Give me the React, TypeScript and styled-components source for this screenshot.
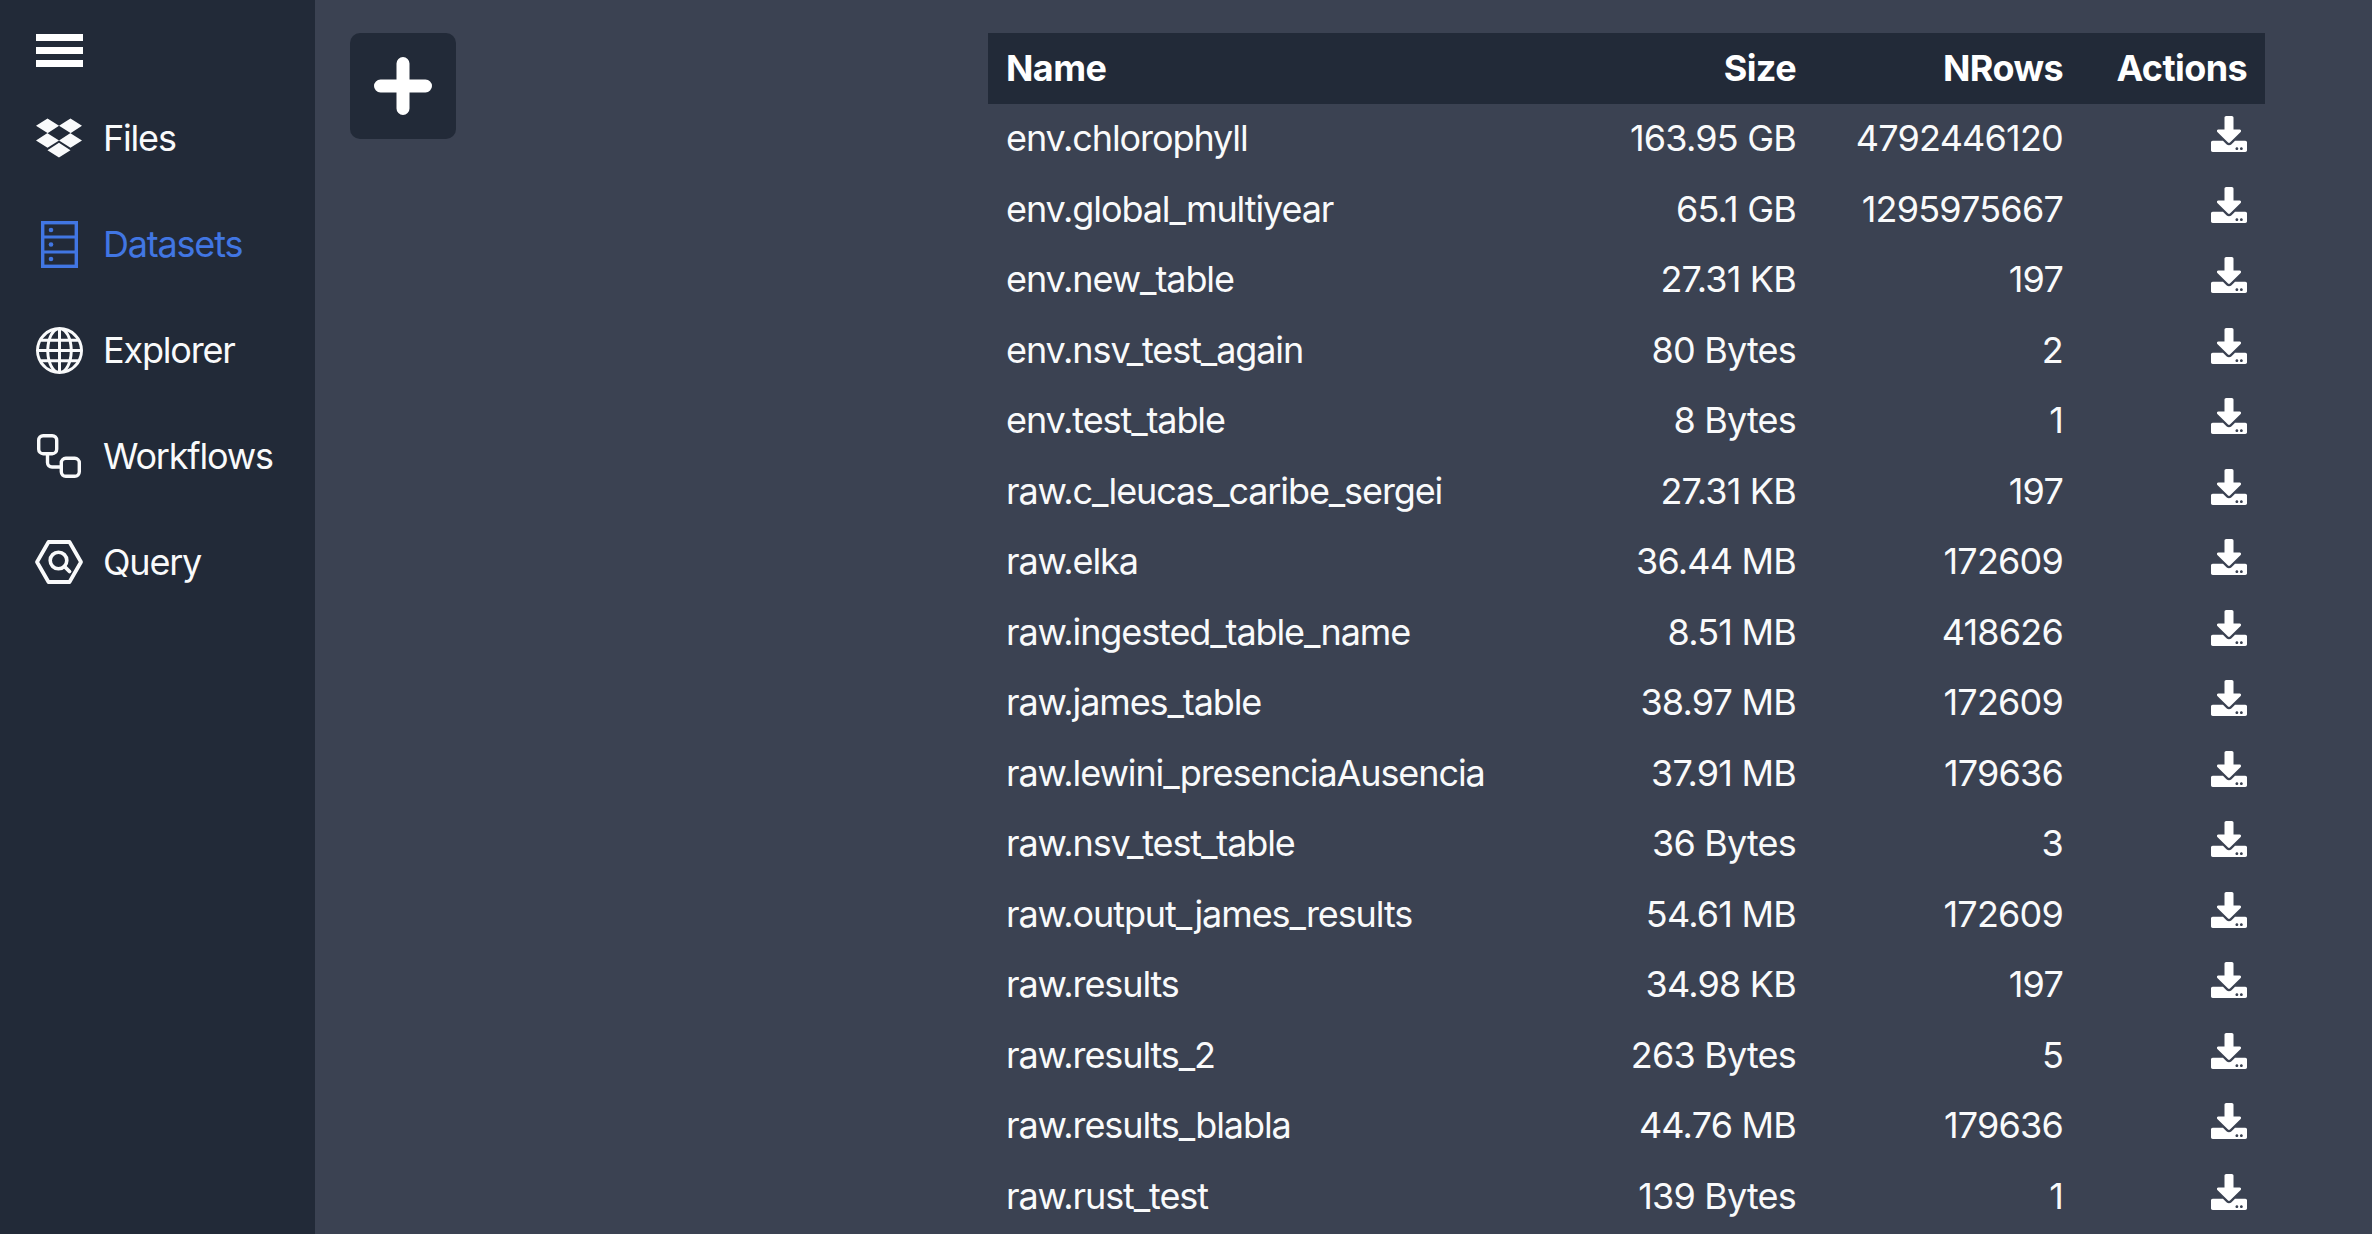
import React from "react";
import styled, { createGlobalStyle } from "styled-components";
import { FaDropbox, FaDownload } from "react-icons/fa";
import { BsGlobe } from "react-icons/bs";

const GlobalStyle = createGlobalStyle`
  html, body {
    margin: 0;
    padding: 0;
    height: 100%;
    overflow: hidden;
    background: #3b4252;
  }
  body {
    font-family: Inter, "Liberation Sans", sans-serif;
    color: #f9fafb;
  }
`;

const rows = [
  ["env.chlorophyll", "163.95 GB", "4792446120"],
  ["env.global_multiyear", "65.1 GB", "1295975667"],
  ["env.new_table", "27.31 KB", "197"],
  ["env.nsv_test_again", "80 Bytes", "2"],
  ["env.test_table", "8 Bytes", "1"],
  ["raw.c_leucas_caribe_sergei", "27.31 KB", "197"],
  ["raw.elka", "36.44 MB", "172609"],
  ["raw.ingested_table_name", "8.51 MB", "418626"],
  ["raw.james_table", "38.97 MB", "172609"],
  ["raw.lewini_presenciaAusencia", "37.91 MB", "179636"],
  ["raw.nsv_test_table", "36 Bytes", "3"],
  ["raw.output_james_results", "54.61 MB", "172609"],
  ["raw.results", "34.98 KB", "197"],
  ["raw.results_2", "263 Bytes", "5"],
  ["raw.results_blabla", "44.76 MB", "179636"],
  ["raw.rust_test", "139 Bytes", "1"],
];

function DatasetsIcon() {
  return (
    <svg width="37" height="47" viewBox="0 0 37 47" fill="none">
      <rect x="1.7" y="1.7" width="33.6" height="43.6" stroke="currentColor" strokeWidth="3.4" />
      <path d="M1.7 16H35.3M1.7 31H35.3" stroke="currentColor" strokeWidth="3.2" />
      <circle cx="10" cy="9" r="2.3" fill="currentColor" />
      <circle cx="10" cy="23.5" r="2.3" fill="currentColor" />
      <circle cx="10" cy="38" r="2.3" fill="currentColor" />
    </svg>
  );
}

function WorkflowIcon() {
  return (
    <svg width="44" height="44" viewBox="0 0 44 44" fill="none" stroke="currentColor" strokeWidth="3.4">
      <rect x="1.7" y="1.7" width="18" height="18" rx="4.5" />
      <rect x="24.3" y="24.3" width="18" height="18" rx="4.5" />
      <path d="M10.5 19.7V28.5A4.5 4.5 0 0 0 15 33H24.3" />
    </svg>
  );
}

function QueryIcon() {
  return (
    <svg width="50" height="46" viewBox="0 0 50 46" fill="none" stroke="currentColor">
      <path d="M14.5 3H35.5L47 23L35.5 43H14.5L3 23Z" strokeWidth="3.8" strokeLinejoin="round" />
      <circle cx="24.5" cy="21.5" r="8.3" strokeWidth="3.6" />
      <path d="M30.5 27.5L35.5 32.5" strokeWidth="3.8" strokeLinecap="round" />
    </svg>
  );
}

function PlusIcon() {
  return (
    <svg width="58" height="58" viewBox="0 0 58 58">
      <path d="M29 6.5V51.5M6.5 29H51.5" stroke="currentColor" strokeWidth="13" strokeLinecap="round" />
    </svg>
  );
}

const navItems = [
  { label: "Files", icon: <FaDropbox size={46} /> },
  { label: "Datasets", icon: <DatasetsIcon />, active: true },
  { label: "Explorer", icon: <BsGlobe size={47} /> },
  { label: "Workflows", icon: <WorkflowIcon /> },
  { label: "Query", icon: <QueryIcon /> },
];

export default function App() {
  return (
    <Page>
      <GlobalStyle />
      <Sidebar>
        <Burger aria-label="menu">
          <span />
          <span />
          <span />
        </Burger>
        <Nav>
          {navItems.map(({ label, icon, active }) => (
            <NavItem key={label} $active={active}>
              <NavIcon>{icon}</NavIcon>
              <span>{label}</span>
            </NavItem>
          ))}
        </Nav>
      </Sidebar>
      <Main>
        <AddButton aria-label="add">
          <PlusIcon />
        </AddButton>
        <Table>
          <colgroup>
            <col width={512} />
            <col width={314} />
            <col width={267} />
            <col width={184} />
          </colgroup>
          <thead>
            <tr>
              <HeadCell>Name</HeadCell>
              <HeadCell $right>Size</HeadCell>
              <HeadCell $right>NRows</HeadCell>
              <HeadCell $right>Actions</HeadCell>
            </tr>
          </thead>
          <tbody>
            {rows.map(([name, size, count]) => (
              <Row key={name}>
                <Cell>{name}</Cell>
                <Cell $right>{size}</Cell>
                <Cell $right>{count}</Cell>
                <Cell $right>
                  <DownloadLink>
                    <FaDownload size={36} />
                  </DownloadLink>
                </Cell>
              </Row>
            ))}
          </tbody>
        </Table>
      </Main>
    </Page>
  );
}

const Page = styled.div`
  display: flex;
  height: 1234px;
  overflow: hidden;
`;

const Sidebar = styled.aside`
  width: 315px;
  flex-shrink: 0;
  background: #222a38;
  padding-top: 34px;
  box-sizing: border-box;
`;

const Burger = styled.div`
  width: 47px;
  height: 33px;
  margin: 0 0 18px 36px;
  display: flex;
  flex-direction: column;
  justify-content: space-between;

  span {
    display: block;
    height: 7px;
    background: #ffffff;
  }
`;

const Nav = styled.nav`
  display: flex;
  flex-direction: column;
`;

const NavItem = styled.div<{ $active?: boolean }>`
  height: 106px;
  display: flex;
  align-items: center;
  gap: 19px;
  padding-left: 34px;
  font-size: 36px;
  letter-spacing: -1.2px;
  color: ${(p) => (p.$active ? "#4176e3" : "#f9fafb")};
`;

const NavIcon = styled.div`
  width: 50px;
  display: flex;
  justify-content: center;
  align-items: center;
`;

const Main = styled.main`
  flex: 1;
  display: grid;
  grid-template-columns: 106px 1277px;
  justify-content: space-between;
  align-items: start;
  padding: 33px 107px 0 35px;
`;

const AddButton = styled.div`
  width: 106px;
  height: 106px;
  border-radius: 10px;
  background: #222a38;
  color: #ffffff;
  display: flex;
  align-items: center;
  justify-content: center;
`;

const Table = styled.table`
  width: 1277px;
  table-layout: fixed;
  border-collapse: collapse;
  font-size: 36px;
`;

const HeadCell = styled.th<{ $right?: boolean }>`
  box-sizing: border-box;
  height: 71px;
  padding: 0 18px 2px ${(p) => (p.$right ? "0" : "18px")};
  background: #222a38;
  color: #ffffff;
  font-weight: 700;
  letter-spacing: -0.6px;
  text-align: ${(p) => (p.$right ? "right" : "left")};
`;

const Row = styled.tr`
  height: 70.5px;
`;

const Cell = styled.td<{ $right?: boolean }>`
  box-sizing: border-box;
  padding: 0 18px 2px ${(p) => (p.$right ? "0" : "18px")};
  letter-spacing: ${(p) => (p.$right ? "-0.8px" : "-1.1px")};
  text-align: ${(p) => (p.$right ? "right" : "left")};
  white-space: nowrap;
`;

const DownloadLink = styled.span`
  display: inline-flex;
  color: #ffffff;
  vertical-align: middle;
  transform: translateY(-7px);
`;
